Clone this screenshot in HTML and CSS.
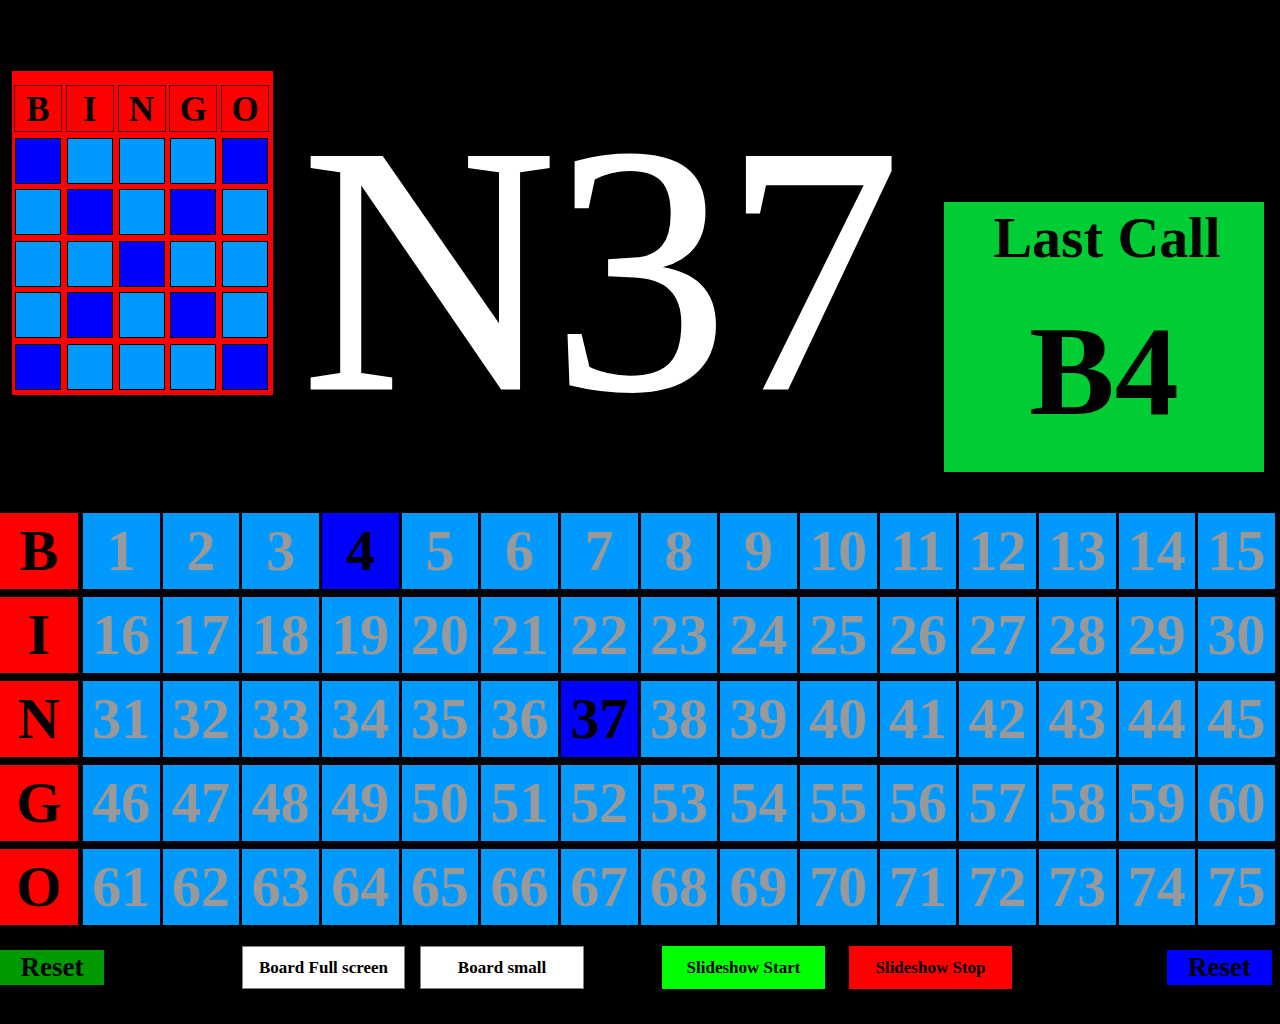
FILE: index.html
```html
<!DOCTYPE html>
<html lang="en">
<head>
<meta charset="utf-8">
<title>Bingo Caller</title>
<link rel="stylesheet" href="styles.css">
</head>
<body>
<div class="top">
  <div class="card">
    <div class="card-head">B</div><div class="card-head">I</div><div class="card-head">N</div><div class="card-head">G</div><div class="card-head">O</div>
    <div class="sq on"></div><div class="sq"></div><div class="sq"></div><div class="sq"></div><div class="sq on"></div>
    <div class="sq"></div><div class="sq on"></div><div class="sq"></div><div class="sq on"></div><div class="sq"></div>
    <div class="sq"></div><div class="sq"></div><div class="sq on"></div><div class="sq"></div><div class="sq"></div>
    <div class="sq"></div><div class="sq on"></div><div class="sq"></div><div class="sq on"></div><div class="sq"></div>
    <div class="sq on"></div><div class="sq"></div><div class="sq"></div><div class="sq"></div><div class="sq on"></div>
  </div>
  <div class="current">N37</div>
  <div class="last">
    <div class="last-title">Last Call</div>
    <div class="last-num">B4</div>
  </div>
</div>

<div class="board">
  <div class="letter">B</div>
  <div class="num">1</div><div class="num">2</div><div class="num">3</div><div class="num called">4</div><div class="num">5</div><div class="num">6</div><div class="num">7</div><div class="num">8</div><div class="num">9</div><div class="num">10</div><div class="num">11</div><div class="num">12</div><div class="num">13</div><div class="num">14</div><div class="num">15</div>
  <div class="letter">I</div>
  <div class="num">16</div><div class="num">17</div><div class="num">18</div><div class="num">19</div><div class="num">20</div><div class="num">21</div><div class="num">22</div><div class="num">23</div><div class="num">24</div><div class="num">25</div><div class="num">26</div><div class="num">27</div><div class="num">28</div><div class="num">29</div><div class="num">30</div>
  <div class="letter">N</div>
  <div class="num">31</div><div class="num">32</div><div class="num">33</div><div class="num">34</div><div class="num">35</div><div class="num">36</div><div class="num called">37</div><div class="num">38</div><div class="num">39</div><div class="num">40</div><div class="num">41</div><div class="num">42</div><div class="num">43</div><div class="num">44</div><div class="num">45</div>
  <div class="letter">G</div>
  <div class="num">46</div><div class="num">47</div><div class="num">48</div><div class="num">49</div><div class="num">50</div><div class="num">51</div><div class="num">52</div><div class="num">53</div><div class="num">54</div><div class="num">55</div><div class="num">56</div><div class="num">57</div><div class="num">58</div><div class="num">59</div><div class="num">60</div>
  <div class="letter">O</div>
  <div class="num">61</div><div class="num">62</div><div class="num">63</div><div class="num">64</div><div class="num">65</div><div class="num">66</div><div class="num">67</div><div class="num">68</div><div class="num">69</div><div class="num">70</div><div class="num">71</div><div class="num">72</div><div class="num">73</div><div class="num">74</div><div class="num">75</div>
</div>

<div class="controls">
  <button class="reset reset-green">Reset</button>
  <button class="btn btn-white btn-full">Board Full screen</button>
  <button class="btn btn-white btn-small">Board small</button>
  <button class="btn btn-start">Slideshow Start</button>
  <button class="btn btn-stop">Slideshow Stop</button>
  <button class="reset reset-blue">Reset</button>
</div>
</body>
</html>
```

FILE: styles.css
```css
html, body {
  margin: 0;
  padding: 0;
  background: #000;
}

body {
  width: 1280px;
  height: 1024px;
  overflow: hidden;
  font-family: "Liberation Serif", "Times New Roman", serif;
  color: #000;
}

/* ---------- top area ---------- */
.top {
  display: flex;
  align-items: flex-start;
  height: 513px;
  padding-left: 12px;
  box-sizing: border-box;
}

.card {
  flex-shrink: 0;
  margin-top: 71px;
  background: #ff0000;
  padding: 14px 4px 5px 2px;
  display: grid;
  grid-template-columns: repeat(5, 48px);
  grid-template-rows: 47px repeat(5, 46px);
  column-gap: 3.75px;
  row-gap: 5.5px;
}

.card-head {
  box-sizing: border-box;
  border: 1px solid #4a0000;
  display: flex;
  align-items: center;
  justify-content: center;
  font-size: 35px;
  font-weight: bold;
  line-height: 1;
  padding-top: 2px;
}

.sq {
  justify-self: center;
  width: 46px;
  height: 46px;
  box-sizing: border-box;
  border: 1px solid #000;
  background: #0099ff;
}

.sq.on {
  background: #0000ff;
}

.current {
  flex-shrink: 0;
  width: 642px;
  margin-left: 29px;
  margin-top: 93px;
  color: #fff;
  font-size: 352px;
  line-height: 1;
  letter-spacing: -4px;
  white-space: nowrap;
  -webkit-text-stroke: 3px #fff;
}

.last {
  flex-shrink: 0;
  margin-top: 202px;
  width: 320px;
  height: 270px;
  box-sizing: border-box;
  padding-top: 7px;
  background: #00cc33;
  display: flex;
  flex-direction: column;
  align-items: center;
  font-weight: bold;
}

.last-title {
  font-size: 58px;
  line-height: 1;
  padding-left: 6px;
}

.last-num {
  margin-top: 40px;
  font-size: 128px;
  line-height: 1;
}

/* ---------- board ---------- */
.board {
  display: grid;
  grid-template-columns: 80px repeat(15, 76.67px);
  grid-auto-rows: 76px;
  column-gap: 3px;
  row-gap: 8px;
  width: 1275px;
}

.letter,
.num {
  display: flex;
  align-items: center;
  justify-content: center;
  font-size: 58px;
  font-weight: bold;
  line-height: 1;
}

.letter {
  width: 78px;
  background: #ff0000;
  color: #000;
}

.num {
  background: #0099ff;
  color: #999999;
}

.num.called {
  background: #0000ff;
  color: #000;
  box-shadow: 0 0 0 1px #000;
}

/* ---------- controls ---------- */
.controls {
  display: flex;
  align-items: center;
  margin-top: 21px;
  height: 43px;
}

.controls button {
  font-family: "Liberation Serif", "Times New Roman", serif;
  font-weight: bold;
  color: #000;
  padding: 0;
  box-sizing: border-box;
  cursor: pointer;
}

.reset {
  width: 104px;
  height: 35px;
  border: none;
  font-size: 27px;
  margin: 0;
}

.reset-green {
  background: #009900;
}

.reset-blue {
  background: #0000ff;
  width: 105px;
  margin-left: 155px;
}

.btn {
  width: 163px;
  height: 43px;
  font-size: 17px;
  border: none;
  margin: 0;
}

.btn-white {
  background: #fff;
  border: 1px solid #808080;
}

.btn-full {
  margin-left: 138px;
}

.btn-small {
  margin-left: 15px;
  width: 164px;
}

.btn-start {
  background: #00ff00;
  margin-left: 78px;
}

.btn-stop {
  background: #ff0000;
  margin-left: 24px;
}
```
